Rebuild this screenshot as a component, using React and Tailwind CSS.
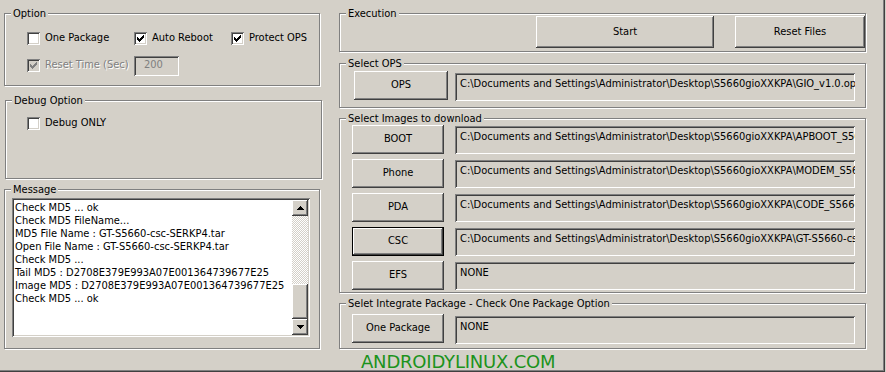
import React from 'react';

const raised =
  'bg-[#d4d0c8] shadow-[inset_-1px_-1px_#404040,inset_1px_1px_#ffffff,inset_-2px_-2px_#808080,inset_2px_2px_#d4d0c8]';
const sunken =
  'shadow-[inset_1px_1px_#808080,inset_-1px_-1px_#ffffff,inset_2px_2px_#404040,inset_-2px_-2px_#d4d0c8]';

const CheckMark = ({ color = '#000' }) => (
  <svg width="9" height="9" viewBox="0 0 9 9" shapeRendering="crispEdges">
    <path
      fill={color}
      d="M1 3h1v3H1z M2 4h1v3H2z M3 5h1v3H3z M4 4h1v3H4z M5 3h1v3H5z M6 2h1v3H6z M7 1h1v3H7z"
    />
  </svg>
);

const Checkbox = ({ checked, disabled }) => (
  <span
    className={`flex items-center justify-center w-[13px] h-[13px] shrink-0 ${sunken} ${
      disabled ? 'bg-[#d4d0c8]' : 'bg-white'
    }`}
  >
    {checked && <CheckMark color={disabled ? '#808080' : '#000'} />}
  </span>
);

const Group = ({ label, className, children }) => (
  <div className={`relative border border-[#808080] shadow-[inset_1px_1px_#ffffff,1px_1px_#ffffff] ${className}`}>
    <span className="absolute left-[6px] -top-[7px] bg-[#d4d0c8] px-[2px] leading-[13px]">{label}</span>
    {children}
  </div>
);

const Button = ({ children, className = '', isDefault }) => (
  <div
    className={`flex items-center justify-center shrink-0 ${
      isDefault
        ? 'bg-[#d4d0c8] shadow-[inset_0_0_0_1px_#000000,inset_-2px_-2px_#404040,inset_2px_2px_#ffffff,inset_-3px_-3px_#808080,inset_3px_3px_#d4d0c8]'
        : raised
    } ${className}`}
  >
    {children}
  </div>
);

const PathBox = ({ text, className = '' }) => (
  <div
    className={`w-[400px] h-[28px] shrink-0 bg-[#d4d0c8] pl-[5px] pt-[4px] overflow-hidden whitespace-nowrap leading-[13px] ${sunken} ${className}`}
  >
    {text}
  </div>
);

const Arrow = ({ up }) => (
  <svg width="7" height="4" viewBox="0 0 7 4" shapeRendering="crispEdges">
    <path fill="#000" d={up ? 'M3 0h1v1h1v1h1v1h1v1H0V3h1V2h1V1h1z' : 'M0 0h7v1H6v1H5v1H4v1H3V3H2V2H1V1H0z'} />
  </svg>
);

const messages = [
  'Check MD5 ... ok',
  'Check MD5 FileName...',
  'MD5 File Name : GT-S5660-csc-SERKP4.tar',
  'Open File Name : GT-S5660-csc-SERKP4.tar',
  'Check MD5 ...',
  'Tail MD5 : D2708E379E993A07E001364739677E25',
  'Image MD5 : D2708E379E993A07E001364739677E25',
  'Check MD5 ... ok',
];

const base = 'C:\\Documents and Settings\\Administrator\\Desktop\\S5660gioXXKPA\\';

const images = [
  { name: 'BOOT', path: base + 'APBOOT_S5660XXKPA.tar.md5' },
  { name: 'Phone', path: base + 'MODEM_S5660XXKPA.tar.md5' },
  { name: 'PDA', path: base + 'CODE_S5660XXKPA.tar.md5' },
  { name: 'CSC', path: base + 'GT-S5660-csc-SERKP4.tar', isDefault: true },
  { name: 'EFS', path: 'NONE' },
];

export default function App() {
  return (
    <div className="w-[886px] h-[372px] bg-[#d4d0c8] text-black text-[11px] font-['DejaVu_Sans_Condensed','DejaVu_Sans',sans-serif] overflow-hidden">
      <div className="w-[885px] h-[372px] flex pt-[13px] shadow-[inset_-1px_-1px_#404040,inset_-2px_-2px_#808080]">
        {/* Left column */}
        <div className="ml-[4px] w-[316px] flex flex-col">
          <Group label="Option" className="h-[73px] pl-[22px]">
            <div className="flex items-center pt-[16px]">
              <div className="w-[107px] flex items-center gap-[5px]">
                <Checkbox />
                <span>One Package</span>
              </div>
              <div className="w-[97px] flex items-center gap-[5px]">
                <Checkbox checked />
                <span>Auto Reboot</span>
              </div>
              <div className="flex items-center gap-[5px]">
                <Checkbox checked />
                <span>Protect OPS</span>
              </div>
            </div>
            <div className="flex items-center h-[20px] mt-[9px]">
              <div className="w-[107px] flex items-center gap-[5px]">
                <Checkbox checked disabled />
                <span className="text-[#808080] [text-shadow:1px_1px_#ffffff]">Reset Time (Sec)</span>
              </div>
              <div className={`w-[45px] h-[20px] bg-[#d4d0c8] pl-[10px] flex items-center text-[#808080] ${sunken}`}>
                200
              </div>
            </div>
          </Group>

          <Group label="Debug Option" className="mt-[14px] ml-[1px] w-[317px] h-[79px] pl-[21px] pt-[14px]">
            <div className="flex items-center gap-[5px]">
              <Checkbox />
              <span>Debug ONLY</span>
            </div>
          </Group>

          <Group label="Message" className="mt-[10px] h-[160px] pl-[7px] pt-[8px]">
            <div className={`w-[298px] h-[139px] bg-white flex p-[2px] ${sunken}`}>
              <div className="flex-1 pl-[1px] pt-[1px] leading-[13px] whitespace-nowrap overflow-hidden">
                {messages.map((m, i) => (
                  <div key={i}>{m}</div>
                ))}
              </div>
              <div className="w-[16px] flex flex-col">
                <div className={`h-[16px] flex items-center justify-center ${raised}`}>
                  <Arrow up />
                </div>
                <div className="flex-1 bg-[image:repeating-conic-gradient(#d4d0c8_0_25%,#ffffff_0_50%)] bg-[length:2px_2px]" />
                <div className={`h-[35px] ${raised}`} />
                <div className={`h-[16px] flex items-center justify-center ${raised}`}>
                  <Arrow />
                </div>
              </div>
            </div>
          </Group>
        </div>

        {/* Right column */}
        <div className="ml-[19px] w-[527px] flex flex-col">
          <Group label="Execution" className="h-[39px] pt-[2px] flex justify-end gap-[21px]">
            <Button className="w-[178px] h-[32px]">Start</Button>
            <Button className="w-[130px] h-[32px]">Reset Files</Button>
          </Group>

          <Group label="Select OPS" className="mt-[11px] h-[45px] pl-[14px] pt-[7px] flex items-start gap-[7px]">
            <Button className="w-[94px] h-[29px]">OPS</Button>
            <PathBox text={base + 'GIO_v1.0.ops'} className="mt-[2px]" />
          </Group>

          <Group label="Select Images to download" className="mt-[10px] h-[175px] pl-[12px] pt-[6px] flex flex-col gap-[5px]">
            {images.map((img) => (
              <div key={img.name} className="flex items-start gap-[11px]">
                <Button className="w-[92px] h-[29px]" isDefault={img.isDefault}>
                  {img.name}
                </Button>
                <PathBox text={img.path} className="mt-[1px]" />
              </div>
            ))}
          </Group>

          <Group
            label="Selet Integrate Package - Check One Package Option"
            className="mt-[10px] h-[46px] pl-[12px] pt-[10px] flex items-start gap-[11px]"
          >
            <Button className="w-[92px] h-[29px]">One Package</Button>
            <PathBox text="NONE" className="mt-[2px]" />
          </Group>

          <div className="mt-[4px] ml-[22px] text-[18px] leading-[18px] tracking-[-0.2px] text-[#1c931c] font-['DejaVu_Sans',sans-serif]">
            ANDROIDYLINUX.COM
          </div>
        </div>
      </div>
    </div>
  );
}
